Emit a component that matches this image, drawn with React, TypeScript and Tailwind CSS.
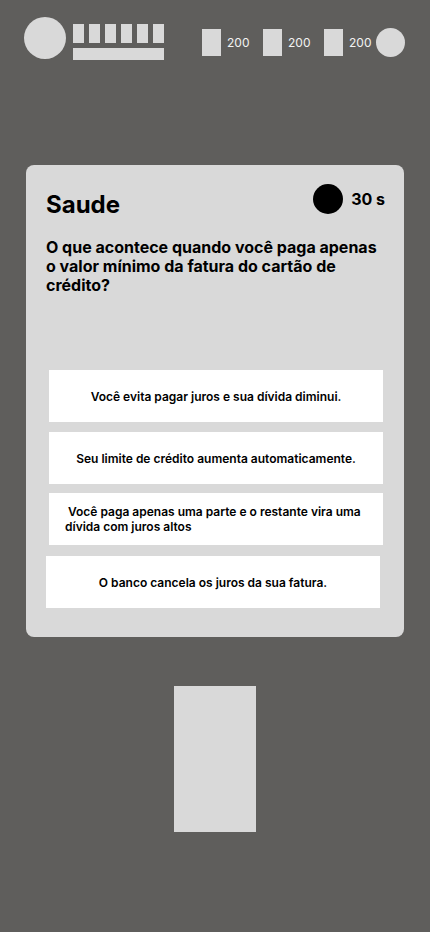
const options = [
  { text: "Você evita pagar juros e sua dívida diminui.", cls: "ml-[23px] mr-[21px] justify-center text-center" },
  { text: "Seu limite de crédito aumenta automaticamente.", cls: "ml-[23px] mr-[21px] mt-[10px] justify-center text-center" },
  { text: "Você paga apenas uma parte e o restante vira uma dívida com juros altos", cls: "ml-[23px] mr-[21px] mt-[9px] px-4 text-left indent-[3px]" },
  { text: "O banco cancela os juros da sua fatura.", cls: "ml-[20px] mr-[24px] mt-[11px] justify-center text-center" },
];

const Score = ({ last }: { last?: boolean }) => (
  <div className={`flex items-center gap-[6px] ${last ? "" : "mr-[15px]"}`}>
    <div className="w-[19px] h-[27px] bg-[#d9d9d9]" />
    <span className="w-[21px] text-[12px] leading-none text-[#f2f2f2] whitespace-nowrap">200</span>
  </div>
);

export default function App() {
  return (
    <div
      className="min-h-[932px] w-[430px] bg-[#5f5e5c] overflow-hidden"
      style={{ fontFamily: "Inter, 'Noto Sans', sans-serif" }}
    >
      {/* top bar */}
      <div className="flex justify-between items-start pt-[17px] pl-[24px] pr-[25px]">
        <div className="flex items-start gap-[7px]">
          <div className="w-[42px] h-[42px] rounded-full bg-[#d9d9d9]" />
          <div className="flex flex-col gap-[5px] mt-[7px]">
            <div className="flex gap-[5px]">
              {[0, 1, 2, 3, 4, 5].map((i) => (
                <div key={i} className="w-[11px] h-[19px] bg-[#d9d9d9]" />
              ))}
            </div>
            <div className="w-[91px] h-[12px] bg-[#d9d9d9]" />
          </div>
        </div>
        <div className="flex items-center mt-[11px]">
          <Score />
          <Score />
          <Score last />
          <div className="ml-[6px] w-[29px] h-[29px] rounded-full bg-[#d9d9d9]" />
        </div>
      </div>

      {/* question card */}
      <div className="mx-[26px] mt-[105px] rounded-lg bg-[#d9d9d9] pt-[19px] pb-[29px]">
        <div className="flex justify-between items-start pl-[20px] pr-[19px]">
          <h1 className="mt-[5px] text-[24px] leading-8 font-bold text-black">Saude</h1>
          <div className="flex items-center gap-2">
            <div className="w-[30px] h-[30px] rounded-full bg-black" />
            <span className="text-[16px] font-bold text-black">30 s</span>
          </div>
        </div>
        <p className="mt-[17px] px-[20px] text-[16px] leading-[19px] font-bold text-black">
          O que acontece quando você paga apenas o valor mínimo da fatura do cartão de crédito?
        </p>
        <div className="mt-[75px] flex flex-col">
          {options.map((o) => (
            <div
              key={o.text}
              className={`h-[52px] bg-white flex items-center text-[12px] leading-[15px] font-semibold text-black ${o.cls}`}
            >
              <span>{o.text}</span>
            </div>
          ))}
        </div>
      </div>

      {/* bottom block */}
      <div className="mt-[49px] ml-[174px] w-[82px] h-[146px] bg-[#d9d9d9]" />
    </div>
  );
}
